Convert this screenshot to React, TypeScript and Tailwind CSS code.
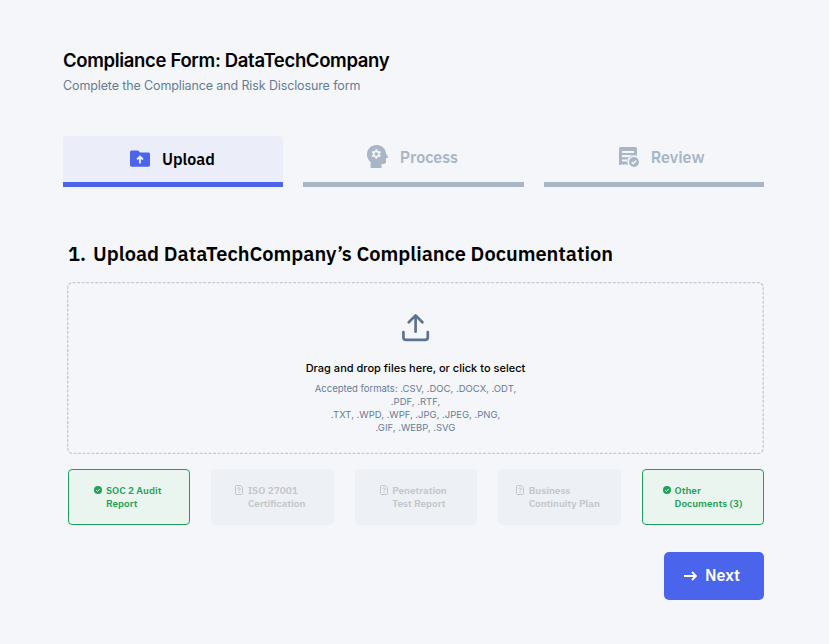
const plex = "font-['IBM_Plex_Sans','Noto_Sans',sans-serif]";

function FolderIcon() {
  return (
    <svg width="20" height="18" viewBox="0 0 20 18" className="shrink-0">
      <path d="M1.5.5h6.6l2 2h8.3q1.6 0 1.6 1.6v11q0 1.6-1.6 1.6H1.6Q0 16.7 0 15.1V2Q0 .5 1.5.5Z" fill="#4a64ec" />
      <path d="M10 13.4V7M7.1 9.5 10 6.6l2.9 2.9" fill="none" stroke="#ebedf8" strokeWidth="1.8" />
    </svg>
  );
}

function ProcessIcon() {
  return (
    <svg width="22" height="24" viewBox="0 0 22 24" className="shrink-0">
      <path
        fill="currentColor"
        d="M9.5 0C15 0 18.5 3.5 19 8.5l2 3.2q.6 1.1-.6 1.3H19v3.7q0 2.3-2.3 2.3H14.5V23H3.6V16.9C1.3 15.2 0 12.5 0 9.5 0 4 4 0 9.5 0Z"
      />
      <circle cx="9.3" cy="9" r="2.7" fill="none" stroke="#f5f6fa" strokeWidth="1.7" />
      <path
        fill="none"
        stroke="#f5f6fa"
        strokeWidth="1.8"
        d="M9.3 4.2v1.7M9.3 12.1v1.7M5.14 6.6l1.47.85M11.99 10.55l1.47.85M5.14 11.4l1.47-.85M11.99 7.45l1.47-.85"
      />
    </svg>
  );
}

function ReviewIcon() {
  return (
    <svg width="20" height="20" viewBox="0 0 20 20" className="shrink-0">
      <path
        fillRule="evenodd"
        fill="currentColor"
        d="M1.5 0h15Q18 0 18 1.5V9.1a6.3 6.3 0 0 0-8.8 8.5l-1.3.5-1.5-1-1.6 1-1.6-1-1.6 1L0 18V1.5Q0 0 1.5 0ZM3 4v2h12V4ZM3 8v2.2h8Q12.4 8.8 14.3 8.5L15 8ZM3 12.6v1.8h5.7q.1-1 .5-1.8Z"
      />
      <circle cx="15" cy="15" r="5" fill="currentColor" />
      <path d="m12.7 15.1 1.6 1.6 3-3.1" fill="none" stroke="#f5f6fa" strokeWidth="1.4" />
    </svg>
  );
}

function UploadIcon() {
  return (
    <svg
      width="28"
      height="28"
      viewBox="0 0 28 28"
      fill="none"
      stroke="#5b7390"
      strokeWidth="2.7"
      strokeLinecap="round"
      strokeLinejoin="round"
    >
      <path d="M13.6 17.7V1.7M6.8 8.2l6.8-6.8 6.8 6.8M1.4 18v5.3q0 2.6 2.6 2.6h19.2q2.6 0 2.6-2.6V18" />
    </svg>
  );
}

function CheckIcon() {
  return (
    <svg width="8" height="8" viewBox="0 0 8 8" className="mt-[2px] shrink-0">
      <circle cx="4" cy="4" r="4" fill="#1fa15a" />
      <path d="m2.2 4.1 1.3 1.3 2.4-2.5" fill="none" stroke="#ebf5ef" strokeWidth="1" />
    </svg>
  );
}

function UnknownFileIcon() {
  return (
    <svg
      width="8"
      height="10"
      viewBox="0 0 8 10"
      className="mt-px shrink-0"
      fill="none"
      stroke="currentColor"
      strokeWidth="1"
    >
      <path d="M1.4.5h4L7.5 2.6v6q0 .9-.9.9H1.4q-.9 0-.9-.9V1.4q0-.9.9-.9Z" />
      <path d="M2.7 3.9Q2.7 2.8 4 2.8t1.3 1.1Q5.3 4.7 4 5.2v.9M4 6.9v1" />
    </svg>
  );
}

function DocCard({ lines, done, pad }: { lines: string[]; done?: boolean; pad: string }) {
  return (
    <div
      className={`flex h-14 items-start rounded-[4px] border pt-[14px] ${pad} ${
        done ? "border-[#1fa15a] bg-[#ebf5ef] text-[#1fa15a]" : "border-[#edf0f4] bg-[#edf0f4] text-[#c3c6ca]"
      } ${done ? "gap-1" : "gap-[4.5px]"}`}
    >
      {done ? <CheckIcon /> : <UnknownFileIcon />}
      <div className={`${plex} text-[10px] leading-[13px] font-semibold whitespace-nowrap`}>
        {lines.map((line) => (
          <div key={line}>{line}</div>
        ))}
      </div>
    </div>
  );
}

export default function App() {
  return (
    <main className="h-[644px] w-[829px] bg-[#f5f6fa] pt-[46px] pr-[65px] pl-[63px] font-['Inter',sans-serif] text-black">
      <h1 className="text-[18.5px] leading-7 font-semibold tracking-[-0.33px] whitespace-nowrap">
        Compliance Form: DataTechCompany
      </h1>
      <p className="mt-[3px] text-[12.5px] leading-[18px] tracking-[-0.12px] whitespace-nowrap text-[#657c98]">
        Complete the Compliance and Risk Disclosure form
      </p>

      <nav className={`mt-[41px] grid h-[51px] grid-cols-3 gap-5 ${plex} text-base font-semibold`}>
        <div className="flex items-center rounded-t-[4px] border-b-[5px] border-[#4a64ec] bg-[#ebedf8] pl-[67px]">
          <FolderIcon />
          <span className="ml-3">Upload</span>
        </div>
        <div className="flex items-center border-b-[5px] border-[#a9b6c5] pb-[5px] pl-[63.5px] text-[#a9b6c5]">
          <ProcessIcon />
          <span className="ml-[11px]">Process</span>
        </div>
        <div className="flex items-center border-b-[5px] border-[#a9b6c5] pb-[4px] pl-[75px] text-[#a9b6c5]">
          <ReviewIcon />
          <span className="ml-3">Review</span>
        </div>
      </nav>

      <h2 className={`mt-[53px] pl-[5px] ${plex} text-[20px] leading-7 font-semibold whitespace-nowrap`}>
        <span className="mr-[7px]">1.</span>
        <span>Upload DataTechCompany’s Compliance Documentation</span>
      </h2>

      <section className="relative mt-[14px] ml-1 flex h-[172px] flex-col items-center pt-[32px] text-center">
        <svg className="absolute inset-0 h-full w-full" fill="none">
          <rect
            x="0.7"
            y="0.5"
            width="695.5"
            height="171"
            rx="5"
            stroke="#c6c8da"
            strokeWidth="1.3"
            strokeDasharray="3 1.5"
          />
        </svg>
        <UploadIcon />
        <p className="mt-[18px] text-[11px] leading-4 font-medium tracking-[0.02px] whitespace-nowrap">
          Drag and drop files here, or click to select
        </p>
        <p className="mt-[6px] text-[9.5px] leading-[13px] whitespace-nowrap text-[#657c98]">
          Accepted formats: .CSV, .DOC, .DOCX, .ODT,
          <br />
          .PDF, .RTF,
          <br />
          .TXT, .WPD, .WPF, .JPG, .JPEG, .PNG,
          <br />
          .GIF, .WEBP, .SVG
        </p>
      </section>

      <div className="mt-[15px] ml-[5px] grid grid-cols-5 gap-[21px]">
        <DocCard done pad="pl-[25px]" lines={["SOC 2 Audit", "Report"]} />
        <DocCard pad="pl-[23px]" lines={["ISO 27001", "Certification"]} />
        <DocCard pad="pl-[24px]" lines={["Penetration", "Test Report"]} />
        <DocCard pad="pl-[17px]" lines={["Business", "Continuity Plan"]} />
        <DocCard done pad="pl-[20px]" lines={["Other", "Documents (3)"]} />
      </div>

      <div className="mt-[27px] flex justify-end">
        <button
          className={`flex h-12 w-[100px] items-center rounded-[5px] bg-[#4a64ec] pl-5 ${plex} text-base font-semibold text-white`}
        >
          <svg width="13" height="10" viewBox="0 0 13 10" fill="none" stroke="currentColor" strokeWidth="1.8">
            <path d="M0 5h12M8 1l4 4-4 4" />
          </svg>
          <span className="ml-2 pb-[2px]">Next</span>
        </button>
      </div>
    </main>
  );
}
